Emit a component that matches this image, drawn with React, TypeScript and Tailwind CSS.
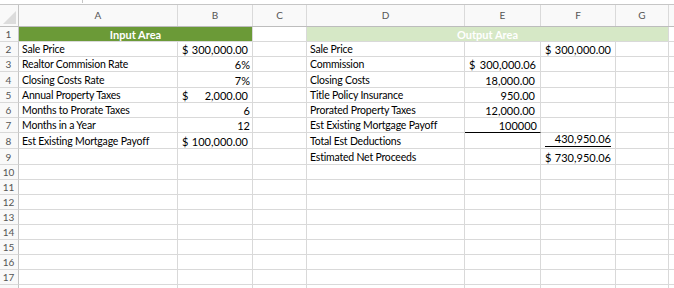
import * as React from "react"

const COLS = "grid grid-cols-[19px_159px_75px_54px_158px_76px_75px_53px_1fr]"
const FONT = { fontFamily: "Lato, 'Open Sans', sans-serif" }

type Cell =
  | { kind: "text"; v: string }
  | { kind: "num"; v: string; pr?: string; border?: boolean }
  | { kind: "acct"; v: string }
  | { kind: "under"; v: string }

type Row = { n: number; h: string; cells: Record<string, Cell>; hideNum?: boolean }

const rows: Row[] = [
  {
    n: 2,
    h: "h-[15px]",
    cells: {
      A: { kind: "text", v: "Sale Price" },
      B: { kind: "acct", v: "300,000.00" },
      D: { kind: "text", v: "Sale Price" },
      F: { kind: "acct", v: "300,000.00" },
    },
  },
  {
    n: 3,
    h: "h-[15px]",
    cells: {
      A: { kind: "text", v: "Realtor Commision Rate" },
      B: { kind: "num", v: "6%" },
      D: { kind: "text", v: "Commission" },
      E: { kind: "acct", v: "300,000.06" },
    },
  },
  {
    n: 4,
    h: "h-[16px]",
    cells: {
      A: { kind: "text", v: "Closing Costs Rate" },
      B: { kind: "num", v: "7%" },
      D: { kind: "text", v: "Closing Costs" },
      E: { kind: "num", v: "18,000.00", pr: "pr-[5px]" },
    },
  },
  {
    n: 5,
    h: "h-[15px]",
    cells: {
      A: { kind: "text", v: "Annual Property Taxes" },
      B: { kind: "acct", v: "2,000.00" },
      D: { kind: "text", v: "Title Policy Insurance" },
      E: { kind: "num", v: "950.00", pr: "pr-[5px]" },
    },
  },
  {
    n: 6,
    h: "h-[15px]",
    cells: {
      A: { kind: "text", v: "Months to Prorate Taxes" },
      B: { kind: "num", v: "6" },
      D: { kind: "text", v: "Prorated Property Taxes" },
      E: { kind: "num", v: "12,000.00", pr: "pr-[5px]" },
    },
  },
  {
    n: 7,
    h: "h-[15px]",
    cells: {
      A: { kind: "text", v: "Months in a Year" },
      B: { kind: "num", v: "12" },
      D: { kind: "text", v: "Est Existing Mortgage Payoff" },
      E: { kind: "num", v: "100000", pr: "pr-[3px]", border: true },
    },
  },
  {
    n: 8,
    h: "h-[16px]",
    cells: {
      A: { kind: "text", v: "Est Existing Mortgage Payoff" },
      B: { kind: "acct", v: "100,000.00" },
      D: { kind: "text", v: "Total Est Deductions" },
      F: { kind: "under", v: "430,950.06" },
    },
  },
  {
    n: 9,
    h: "h-[16px]",
    cells: {
      D: { kind: "text", v: "Estimated Net Proceeds" },
      F: { kind: "acct", v: "730,950.06" },
    },
  },
  ...[10, 11, 12, 13, 14, 15, 16, 17].map((n) => ({ n, h: "h-[15px]", cells: {} })),
  { n: 18, h: "h-[15px]", cells: {}, hideNum: true },
]

const grid = "border-r border-b border-[#d9d9d9]"

function CellView({ c }: { c?: Cell }) {
  if (!c) return <div className={grid} />
  if (c.kind === "text")
    return (
      <div className={`${grid} flex items-end pl-[3px] text-[10.5px] leading-[13px] tracking-[-0.2px] whitespace-nowrap`}>
        {c.v}
      </div>
    )
  if (c.kind === "num")
    return (
      <div
        className={`flex items-end justify-end leading-[13px] border-r ${
          c.border ? "border-b border-b-black border-r-[#d9d9d9]" : "border-b border-[#d9d9d9]"
        } ${c.pr ?? "pr-[2px]"}`}
      >
        {c.v}
      </div>
    )
  if (c.kind === "acct")
    return (
      <div className={`${grid} flex items-end justify-between pl-[4px] pr-[4px] leading-[13px]`}>
        <span>$</span>
        <span>{c.v}</span>
      </div>
    )
  return (
    <div className={`${grid} flex items-end px-[4px] pb-px`}>
      <span className="flex-1 border-b border-black text-right leading-[12px] pb-px">{c.v}</span>
    </div>
  )
}

function RowNum({ n, hide }: { n: number; hide?: boolean }) {
  return (
    <div className="flex items-end justify-center border-r border-r-[#c4c4c4] border-b border-b-[#d9d9d9] bg-[#f9f9f9] pr-px text-[10px] leading-[13px] text-[#555]">
      {hide ? "" : n}
    </div>
  )
}

export default function App() {
  return (
    <div className="h-[288px] w-[674px] overflow-hidden bg-white text-[11px] text-black" style={FONT}>
      <div className="h-[5px] border-b border-[#c6c6c6] bg-white">
        <div className="ml-[82px] h-[3px] w-px bg-[#c6c6c6]" />
      </div>

      {/* column letters */}
      <div className={`${COLS} h-[22px] border-b border-[#bdbdbd] bg-[#f9f9f9] text-[10px] text-[#555]`}>
        <div className="relative border-r border-[#c4c4c4]">
          <svg className="absolute right-[2px] bottom-[2px]" width="13" height="13" viewBox="0 0 13 13">
            <polygon points="13,0 13,13 0,13" fill="#dcdcdc" />
          </svg>
        </div>
        {["A", "B", "C", "D", "E", "F", "G"].map((l) => (
          <div key={l} className="flex items-center justify-center border-r border-[#dadada]">
            {l}
          </div>
        ))}
        <div />
      </div>

      {/* row 1 */}
      <div className={`${COLS} h-[15px]`}>
        <RowNum n={1} />
        <div className="col-span-2 flex items-end justify-center border-r border-b border-[#d9d9d9] bg-[#6b9a37] font-bold leading-[13px] text-white">
          Input Area
        </div>
        <div className={grid} />
        <div className="col-span-4 flex items-end justify-center border-r border-b border-r-[#d9d9d9] border-b-[#d9d9d9] bg-[#d6e8c6] font-bold leading-[13px] text-white">
          Output Area
        </div>
        <div className="border-b border-[#d9d9d9]" />
      </div>

      {rows.map((r) => (
        <div key={r.n} className={`${COLS} ${r.h}`}>
          <RowNum n={r.n} hide={r.hideNum} />
          {["A", "B", "C", "D", "E", "F", "G"].map((k) => (
            <CellView key={k} c={r.cells[k]} />
          ))}
          <div className="border-b border-[#d9d9d9]" />
        </div>
      ))}
    </div>
  )
}
